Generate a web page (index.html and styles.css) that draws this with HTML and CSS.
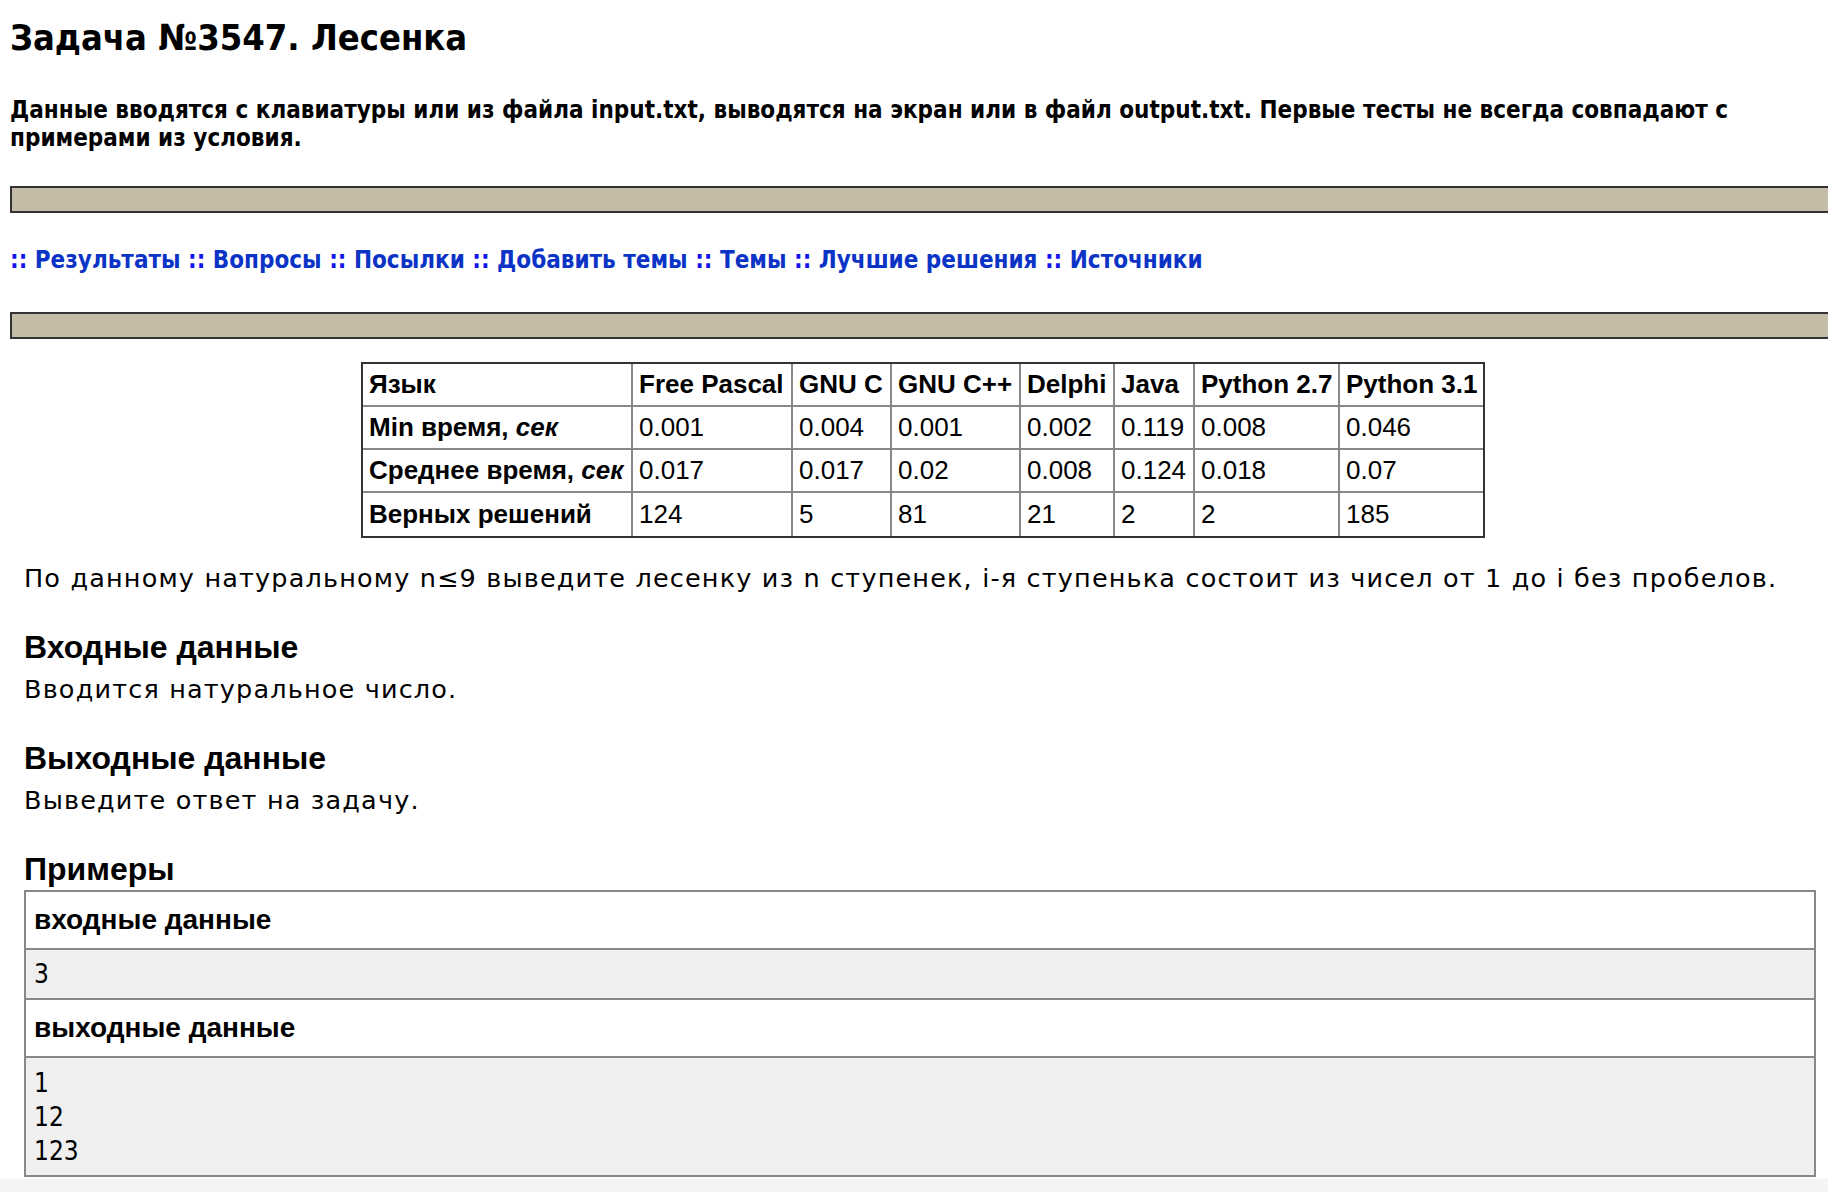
FILE: index.html
```html
<!DOCTYPE html>
<html lang="ru">
<head>
<meta charset="utf-8">
<title>Задача №3547. Лесенка</title>
<link rel="stylesheet" href="styles.css">
</head>
<body>
<h1 class="title">Задача №3547. Лесенка</h1>
<p class="io-note">Данные вводятся с клавиатуры или из файла input.txt, выводятся на экран или в файл output.txt. Первые тесты не всегда совпадают с примерами из условия.</p>
<div class="bar"></div>
<nav class="nav"><span class="sep">::</span> <a href="#">Результаты</a> <span class="sep">::</span> <a href="#">Вопросы</a> <span class="sep">::</span> <a href="#">Посылки</a> <span class="sep">::</span> <a href="#">Добавить темы</a> <span class="sep">::</span> <a href="#">Темы</a> <span class="sep">::</span> <a href="#">Лучшие решения</a> <span class="sep">::</span> <a href="#">Источники</a></nav>
<div class="bar bar-2"></div>
<table class="stats">
<tr><th class="c1">Язык</th><th class="c2">Free Pascal</th><th class="c3">GNU C</th><th class="c4">GNU C++</th><th class="c5">Delphi</th><th class="c6">Java</th><th class="c7">Python 2.7</th><th class="c8">Python 3.1</th></tr>
<tr><th>Min время, <i>сек</i></th><td>0.001</td><td>0.004</td><td>0.001</td><td>0.002</td><td>0.119</td><td>0.008</td><td>0.046</td></tr>
<tr><th>Среднее время, <i>сек</i></th><td>0.017</td><td>0.017</td><td>0.02</td><td>0.008</td><td>0.124</td><td>0.018</td><td>0.07</td></tr>
<tr><th>Верных решений</th><td>124</td><td>5</td><td>81</td><td>21</td><td>2</td><td>2</td><td>185</td></tr>
</table>
<div class="statement">
<p class="legend">По данному натуральному n≤9 выведите лесенку из n ступенек, i-я ступенька состоит из чисел от 1 до i без пробелов.</p>
<h2 class="sec">Входные данные</h2>
<p class="text">Вводится натуральное число.</p>
<h2 class="sec">Выходные данные</h2>
<p class="text">Выведите ответ на задачу.</p>
<h2 class="sec">Примеры</h2>
<table class="sample">
<tr><th>входные данные</th></tr>
<tr><td class="data-in">3</td></tr>
<tr><th>выходные данные</th></tr>
<tr><td class="data-out">1<br>12<br>123</td></tr>
</table>
</div>
</body>
</html>
```

FILE: styles.css
```css
html {
  background: linear-gradient(to bottom, #fff 1178px, #f4f4f4 1179px) fixed;
}
body {
  margin: 0 0 0 10px;
  color: #000;
  font-family: "DejaVu Sans", Verdana, sans-serif;
  overflow-x: hidden;
}
.title {
  margin: 16px 0 0;
  font-family: "DejaVu Sans Condensed", "DejaVu Sans", sans-serif;
  font-stretch: condensed;
  font-weight: bold;
  font-size: 36px;
  line-height: 44px;
}
.io-note {
  margin: 36px 0 0;
  font-family: "DejaVu Sans Condensed", "DejaVu Sans", sans-serif;
  font-stretch: condensed;
  font-weight: bold;
  font-size: 24px;
  line-height: 28px;
}
.bar {
  margin-top: 34px;
  height: 23px;
  background: #c5bca8;
  border: 2px solid #333;
  border-right: none;
}
.bar-2 {
  margin-top: 38px;
}
.nav {
  margin-top: 33px;
  font-family: "DejaVu Sans Condensed", "DejaVu Sans", sans-serif;
  font-stretch: condensed;
  font-weight: bold;
  font-size: 24px;
  line-height: 28px;
  color: #1414ee;
}
.nav a {
  color: #0b34c6;
  text-decoration: none;
}
.stats {
  margin: 23px 0 0 351px;
  width: 1124px;
  table-layout: fixed;
  border-collapse: separate;
  border-spacing: 0;
  border: 2px solid #333;
  font-family: "Liberation Sans", Arial, sans-serif;
  font-size: 26px;
}
.stats th,
.stats td {
  box-sizing: border-box;
  height: 43px;
  padding: 0 6px;
  text-align: left;
  vertical-align: middle;
  border-right: 2px solid #888;
  border-bottom: 2px solid #888;
  white-space: nowrap;
}
.stats tr:last-child th,
.stats tr:last-child td {
  border-bottom: none;
}
.stats tr > :last-child {
  border-right: none;
}
.stats i {
  font-style: italic;
}
.c1 { width: 270px; }
.c2 { width: 160px; }
.c3 { width: 99px; }
.c4 { width: 129px; }
.c5 { width: 94px; }
.c6 { width: 80px; }
.c7 { width: 145px; }
.c8 { width: 143px; }
.statement {
  margin: 0 12px 0 14px;
}
.legend {
  margin: 24px 0 0;
  font-size: 25.5px;
  letter-spacing: 1.17px;
  line-height: 32px;
}
.sec {
  margin: 37px 0 0;
  font-family: "Liberation Sans", Arial, sans-serif;
  font-weight: bold;
  font-size: 32px;
  line-height: 32px;
}
.text {
  margin: 10px 0 0;
  font-size: 25.5px;
  letter-spacing: 1.17px;
  line-height: 32px;
}
.sample {
  margin-top: 5px;
  width: 100%;
  border-collapse: separate;
  border-spacing: 0;
  border: 2px solid #888;
}
.sample th {
  box-sizing: border-box;
  height: 58px;
  padding: 0 8px;
  text-align: left;
  font-family: "Liberation Sans", Arial, sans-serif;
  font-weight: bold;
  font-size: 28px;
  background: #fff;
  border-bottom: 2px solid #888;
}
.sample td {
  padding: 0 8px;
  background: #efefef;
  font-family: "DejaVu Sans Condensed", "DejaVu Sans", sans-serif;
  font-stretch: condensed;
  font-size: 26px;
  line-height: 34px;
  border-bottom: 2px solid #888;
}
.sample .data-in {
  height: 50px;
  box-sizing: border-box;
}
.sample .data-out {
  border-bottom: none;
  height: 117px;
  box-sizing: border-box;
  vertical-align: top;
  padding-top: 8px;
}
```
